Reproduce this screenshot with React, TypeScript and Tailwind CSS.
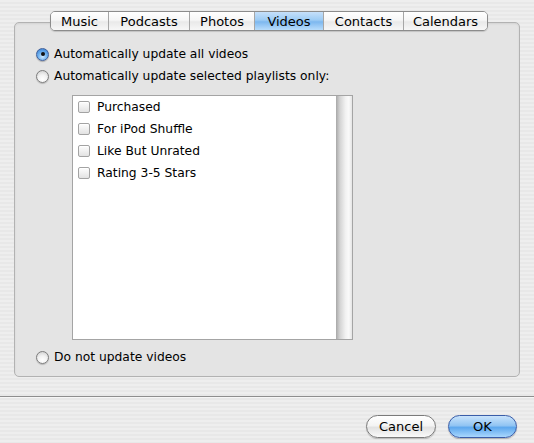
import React from "react";

const font = { fontFamily: '"Lucida Grande", "DejaVu Sans", sans-serif' };

function Radio({ checked }: { checked?: boolean }) {
  return checked ? (
    <span className="relative flex h-[13px] w-[13px] shrink-0 items-center justify-center rounded-full border border-[#3f5f9a] bg-[radial-gradient(circle_at_50%_70%,#cfe9ff_0%,#6fb1ee_45%,#2f77cf_100%)] shadow-[0_1px_1px_rgba(0,0,0,0.25)]">
      <span className="h-[4px] w-[4px] rounded-full bg-[#111]" />
    </span>
  ) : (
    <span className="h-[13px] w-[13px] shrink-0 rounded-full border border-[#7d7d7d] bg-[radial-gradient(circle_at_50%_75%,#ffffff_0%,#f2f2f2_45%,#c9c9c9_100%)] shadow-[0_1px_1px_rgba(0,0,0,0.2)]" />
  );
}

function Check() {
  return (
    <span className="h-[12px] w-[12px] shrink-0 rounded-[2px] border border-[#a3a3a3] bg-[linear-gradient(to_bottom,#fdfdfd,#f0f0f0_50%,#e2e2e2)] shadow-[inset_0_1px_0_#fff]" />
  );
}

const tabs = [
  { label: "Music", w: "w-[57px]" },
  { label: "Podcasts", w: "w-[81px]" },
  { label: "Photos", w: "w-[65px]" },
  { label: "Videos", w: "w-[69px]", active: true },
  { label: "Contacts", w: "w-[80px]" },
  { label: "Calendars", w: "w-[84px]" },
];

export default function App() {
  return (
    <div
      className="flex h-[443px] w-[534px] flex-col overflow-hidden bg-[image:repeating-linear-gradient(to_bottom,#eeeeee_0px,#eeeeee_2px,#e8e8e8_2px,#e8e8e8_4px)] text-[12.3px] text-black"
      style={font}
    >
      <div className="flex flex-col px-[14px] pt-[11px]">
        <div className="relative z-10 flex pl-[36px]">
          <div className="flex h-[20px] overflow-hidden rounded-[5px] border border-[#8c8c8c] shadow-[0_1px_1px_rgba(0,0,0,0.15)]">
            {tabs.map((t, i) => (
              <div
                key={t.label}
                className={
                  (t.active
                    ? "bg-[linear-gradient(to_bottom,#c6e0fa_0%,#9ccbf4_45%,#7db8ef_55%,#b9ddfc_100%)] "
                    : "bg-[linear-gradient(to_bottom,#ffffff_0%,#f6f6f6_45%,#e9e9e9_55%,#f7f7f7_100%)] ") +
                  t.w +
                  " flex items-center justify-center text-[13px] leading-none " +
                  (i > 0 ? "border-l border-l-[#a6a6a6]" : "")
                }
              >
                {t.label}
              </div>
            ))}
          </div>
        </div>
        <div className="-mt-[9px] flex h-[355px] flex-col rounded-[5px] border border-[#b2b2b2] bg-[#e4e4e4] pl-[21px] pt-[23px] shadow-[inset_0_1px_2px_rgba(0,0,0,0.08)]">
          <div className="flex h-[16px] items-center gap-[5px]">
            <Radio checked />
            <span>Automatically update all videos</span>
          </div>
          <div className="mt-[6px] flex h-[16px] items-center gap-[5px]">
            <Radio />
            <span>Automatically update selected playlists only:</span>
          </div>
          <div className="ml-[36px] mt-[11px] flex h-[245px] w-[281px] border border-[#a4a4a4] bg-white">
            <div className="flex flex-1 flex-col pl-[5px]">
              {["Purchased", "For iPod Shuffle", "Like But Unrated", "Rating 3-5 Stars"].map((p) => (
                <div key={p} className="flex h-[22px] items-center gap-[7px]">
                  <Check />
                  <span>{p}</span>
                </div>
              ))}
            </div>
            <div className="w-[16px] bg-[linear-gradient(to_right,#a8a8a8_0%,#d4d4d4_25%,#f2f2f2_60%,#fafafa_80%,#e4e4e4_100%)]" />
          </div>
          <div className="mt-[9px] flex h-[16px] items-center gap-[5px]">
            <Radio />
            <span>Do not update videos</span>
          </div>
        </div>
      </div>
      <div className="mt-[19px] h-[1px] w-full bg-[#8e8e8e]" />
      <div className="h-[1px] w-full bg-[#f6f6f6]" />
      <div className="mt-[17px] flex justify-end gap-[12px] pr-[17px]">
        <button className="flex h-[23px] w-[70px] items-center justify-center rounded-full border border-[#7a7a7a] bg-[linear-gradient(to_bottom,#ffffff_0%,#f4f4f4_45%,#e2e2e2_55%,#fafafa_100%)] text-[13px] shadow-[0_1px_1px_rgba(0,0,0,0.2)]">
          Cancel
        </button>
        <button className="flex h-[23px] w-[69px] items-center justify-center rounded-full border border-[#3a5da8] bg-[linear-gradient(to_bottom,#c9e3fb_0%,#92c5f3_45%,#5ea8ee_55%,#a9d7fd_100%)] text-[13px] shadow-[0_1px_1px_rgba(0,0,0,0.25)]">
          OK
        </button>
      </div>
    </div>
  );
}
